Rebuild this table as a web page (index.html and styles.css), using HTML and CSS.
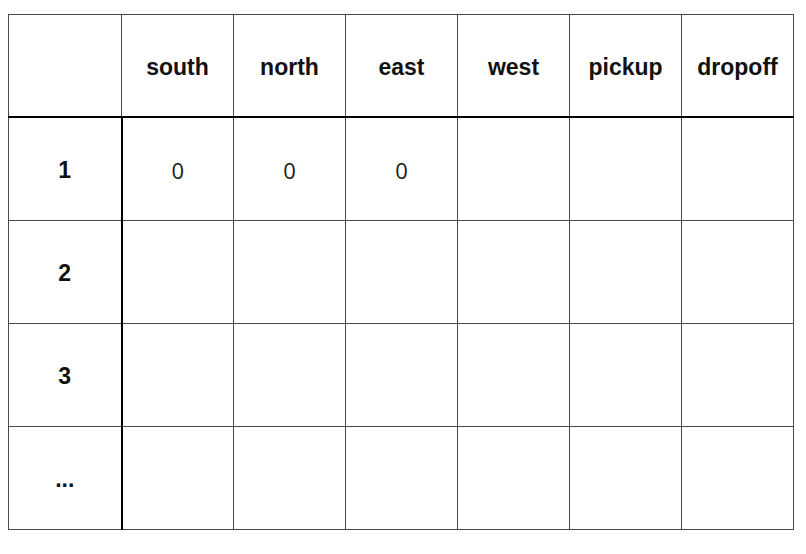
FILE: index.html
```html
<!DOCTYPE html>
<html>
<head>
<meta charset="utf-8">
<link rel="stylesheet" href="styles.css">
</head>
<body>
<table class="grid">
  <colgroup>
    <col class="c-first">
    <col class="c"><col class="c"><col class="c"><col class="c"><col class="c"><col class="c">
  </colgroup>
  <thead>
    <tr>
      <th class="corner"></th>
      <th>south</th>
      <th>north</th>
      <th>east</th>
      <th>west</th>
      <th>pickup</th>
      <th>dropoff</th>
    </tr>
  </thead>
  <tbody>
    <tr><th class="rowhead">1</th><td>0</td><td>0</td><td>0</td><td></td><td></td><td></td></tr>
    <tr><th class="rowhead">2</th><td></td><td></td><td></td><td></td><td></td><td></td></tr>
    <tr><th class="rowhead">3</th><td></td><td></td><td></td><td></td><td></td><td></td></tr>
    <tr><th class="rowhead">...</th><td></td><td></td><td></td><td></td><td></td><td></td></tr>
  </tbody>
</table>
</body>
</html>
```
FILE: styles.css
```css
html, body {
  margin: 0;
  padding: 0;
  background: #fff;
}
body {
  padding: 14px 0 0 8px;
}
.grid {
  border-collapse: collapse;
  table-layout: fixed;
  width: 786px;
  color: #111;
}
.c-first { width: 113px; }
.c { width: 112px; }
.grid th, .grid td {
  border: 1px solid #4a4a4a;
  height: 100px;
  padding: 2px 0 0;
  text-align: center;
  vertical-align: middle;
}
.grid th {
  font-family: "Liberation Sans", Arial, sans-serif;
  font-weight: bold;
  font-size: 23px;
}
.grid td {
  font-family: "Open Sans", sans-serif;
  font-size: 22px;
  color: #1a1a1a;
}
.grid thead th {
  border-bottom: 2px solid #000;
  height: 98px;
  padding-top: 3px;
}
.grid .rowhead {
  border-right: 2px solid #000;
}
```
